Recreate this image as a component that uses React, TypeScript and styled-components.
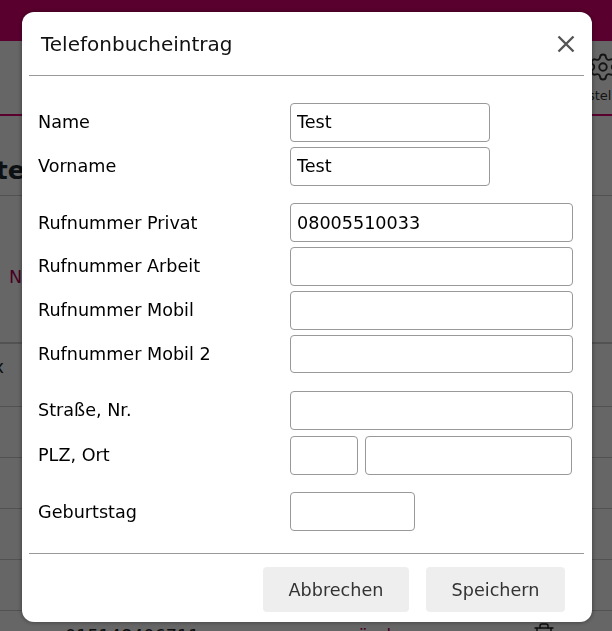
import styled, { createGlobalStyle } from 'styled-components';
import { Settings, Trash2 } from 'lucide-react';

const GlobalStyle = createGlobalStyle`
  html, body {
    margin: 0;
    height: 100%;
    overflow: hidden;
    background: #fff;
    font-family: "DejaVu Sans", sans-serif;
  }
`;

// Page behind the dialog
const Page = styled.div`
  width: 612px;
  height: 631px;
  overflow: hidden;
`;

const TopBar = styled.div`
  height: 41px;
  background: #e20074;
`;

const Nav = styled.div`
  height: 73px;
  display: flex;
  justify-content: flex-end;
  border-bottom: 2px solid #e20074;
  overflow: hidden;
`;

const NavItem = styled.div`
  width: 84px;
  flex: none;
  margin-right: -42px;
  padding-top: 11px;
  display: flex;
  flex-direction: column;
  align-items: center;
  font-size: 13px;
  color: #333;
  svg {
    margin-right: 18px;
    margin-bottom: 6px;
  }
`;

const HeadingBar = styled.div`
  height: 80px;
  display: flex;
  align-items: flex-end;
  padding-bottom: 10px;
  box-sizing: border-box;
  border-bottom: 1px solid #ccc;
`;

const Heading = styled.h1`
  margin: 0;
  width: 25px;
  display: flex;
  justify-content: flex-end;
  font-size: 25.6px;
  line-height: 30px;
  font-weight: 700;
  color: #222b33;
`;

const FilterBar = styled.div`
  height: 148px;
  box-sizing: border-box;
  padding: 71px 0 0 9px;
  border-bottom: 2px solid #ccc;
  font-size: 17.6px;
  line-height: 20px;
  color: #b0005a;
`;

const Row = styled.div<{ $height: number }>`
  height: ${(p) => p.$height}px;
  box-sizing: border-box;
  border-bottom: 1px solid #ccc;
  font-size: 17.6px;
`;

const NameCell = styled.div`
  width: 4px;
  padding-top: 13px;
  display: flex;
  justify-content: flex-end;
  color: #222;
`;

const LastRow = styled.div`
  display: flex;
  padding-top: 11px;
  font-size: 17.6px;
  line-height: 20px;
  color: #222;
`;

const Phone = styled.span`
  margin-left: 65px;
  padding-top: 4px;
  width: 293px;
`;

const EditLink = styled.span`
  padding-top: 4px;
  width: 174px;
  color: #b0005a;
`;

// Dialog
const Overlay = styled.div`
  position: fixed;
  inset: 0;
  background: rgba(0, 0, 0, 0.6);
`;

const Dialog = styled.div`
  position: absolute;
  left: 22px;
  top: 12px;
  width: 570px;
  height: 610px;
  box-sizing: border-box;
  padding: 0 8px 0 7px;
  display: flex;
  flex-direction: column;
  background: #fff;
  border-radius: 12px;
  box-shadow: 0 0 5px rgba(0, 0, 0, 0.45);
  color: #000;
`;

const Header = styled.div`
  height: 64px;
  flex: none;
  box-sizing: border-box;
  display: flex;
  align-items: center;
  justify-content: space-between;
  padding: 0 9px 0 12px;
  border-bottom: 1px solid #999;
`;

const Title = styled.h2`
  margin: 0;
  font-size: 20px;
  font-weight: 400;
  color: #111;
`;

const CloseButton = styled.button`
  width: 18px;
  height: 18px;
  padding: 0;
  border: 0;
  background: none;
  display: flex;
  svg {
    display: block;
  }
`;

const Form = styled.form`
  flex: 1;
  display: flex;
  flex-direction: column;
  gap: 17.6px;
  padding: 27px 0 0 9px;
`;

const Group = styled.div<{ $gap?: number }>`
  display: flex;
  flex-direction: column;
  gap: ${(p) => p.$gap ?? 5}px;
`;

const FieldRow = styled.div`
  display: flex;
  align-items: center;
  height: 38.8px;
`;

const Label = styled.label`
  width: 252px;
  flex: none;
  font-size: 17.6px;
`;

const Input = styled.input<{ $width: number }>`
  width: ${(p) => p.$width}px;
  height: 100%;
  box-sizing: border-box;
  padding: 0 6px;
  border: 1px solid #999;
  border-radius: 4px;
  background: #fff;
  font: 17.6px "DejaVu Sans", sans-serif;
  color: #000;
  outline: none;
`;

const Inputs = styled.div`
  display: flex;
  gap: 7px;
  height: 100%;
`;

const Footer = styled.div`
  height: 69px;
  flex: none;
  box-sizing: border-box;
  display: flex;
  justify-content: flex-end;
  gap: 17px;
  padding: 13px 19px 0 0;
  border-top: 1px solid #999;
`;

const Button = styled.button<{ $width: number }>`
  width: ${(p) => p.$width}px;
  height: 45px;
  border: 0;
  border-radius: 4px;
  background: #eee;
  font: 17.6px "DejaVu Sans", sans-serif;
  color: #333;
`;

const fields = [
  [
    { label: 'Name', value: 'Test', width: 200 },
    { label: 'Vorname', value: 'Test', width: 200 },
  ],
  [
    { label: 'Rufnummer Privat', value: '08005510033', width: 283 },
    { label: 'Rufnummer Arbeit', value: '', width: 283 },
    { label: 'Rufnummer Mobil', value: '', width: 283 },
    { label: 'Rufnummer Mobil 2', value: '', width: 283 },
  ],
];

const App = () => {
  return (
    <>
      <GlobalStyle />
      <Page>
        <TopBar />
        <Nav>
          <NavItem>
            <Settings size={30} strokeWidth={1.5} />
            Einstellungen
          </NavItem>
        </Nav>
        <HeadingBar>
          <Heading>Kontakte</Heading>
        </HeadingBar>
        <FilterBar>Name</FilterBar>
        <Row $height={63}>
          <NameCell>Max</NameCell>
        </Row>
        <Row $height={51} />
        <Row $height={51} />
        <Row $height={51} />
        <Row $height={51} />
        <LastRow>
          <Phone>015148406711</Phone>
          <EditLink>ändern</EditLink>
          <Trash2 size={24} strokeWidth={1.5} />
        </LastRow>
      </Page>
      <Overlay>
        <Dialog>
          <Header>
            <Title>Telefonbucheintrag</Title>
            <CloseButton type="button" aria-label="Schließen">
              <svg width="18" height="18" viewBox="0 0 18 18" fill="none" stroke="#555" strokeWidth="2.4">
                <path d="M1.5 1.5 16.5 16.5M16.5 1.5 1.5 16.5" />
              </svg>
            </CloseButton>
          </Header>
          <Form>
            {fields.map((group, i) => (
              <Group key={i}>
                {group.map((f) => (
                  <FieldRow key={f.label}>
                    <Label>{f.label}</Label>
                    <Input $width={f.width} defaultValue={f.value} />
                  </FieldRow>
                ))}
              </Group>
            ))}
            <Group $gap={6}>
              <FieldRow>
                <Label>Straße, Nr.</Label>
                <Input $width={283} />
              </FieldRow>
              <FieldRow>
                <Label>PLZ, Ort</Label>
                <Inputs>
                  <Input $width={68} />
                  <Input $width={207} />
                </Inputs>
              </FieldRow>
            </Group>
            <Group>
              <FieldRow>
                <Label>Geburtstag</Label>
                <Input $width={125} />
              </FieldRow>
            </Group>
          </Form>
          <Footer>
            <Button type="button" $width={146}>Abbrechen</Button>
            <Button type="button" $width={139}>Speichern</Button>
          </Footer>
        </Dialog>
      </Overlay>
    </>
  );
};

export default App;
